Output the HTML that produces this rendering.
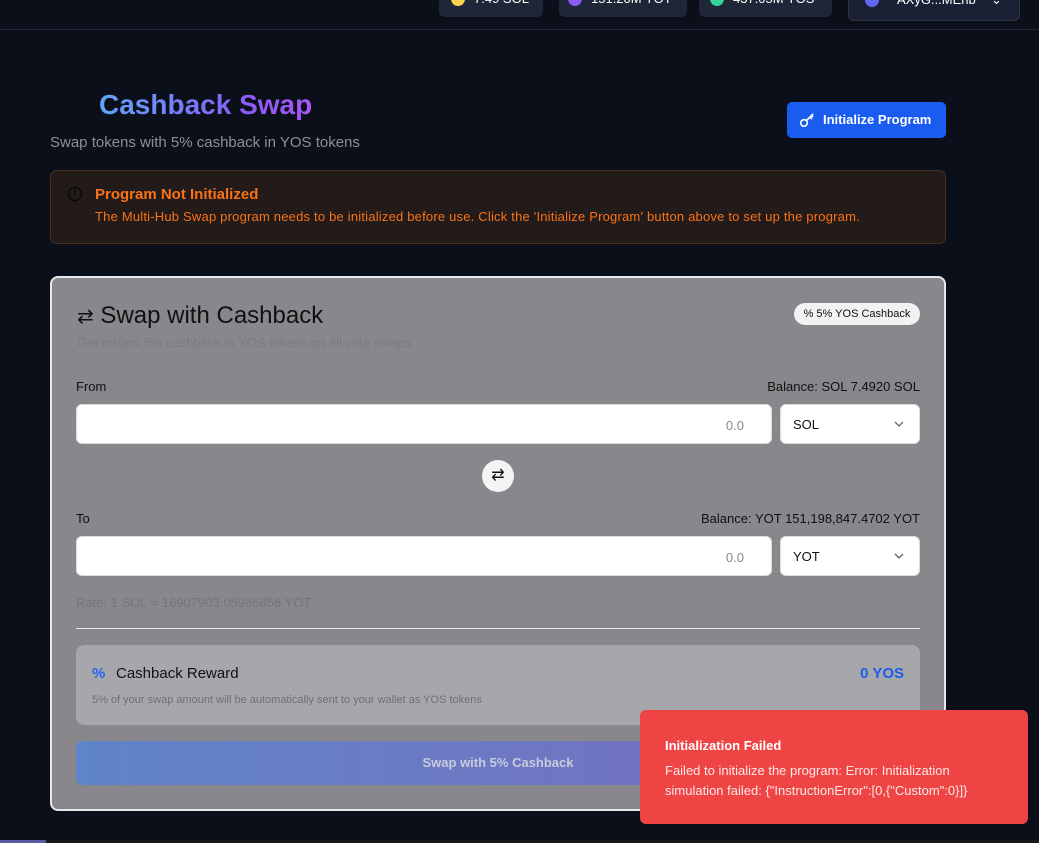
<!DOCTYPE html>
<html><head><style>
*{box-sizing:border-box;margin:0;padding:0}
body{width:1039px;height:843px;background:#0b0f1a;font-family:"Liberation Sans",sans-serif;position:relative;overflow:hidden}
.a{position:absolute}
.pill{position:absolute;top:-6px;height:23px;background:#1e2638;border-radius:6px;overflow:hidden}
.pill span{position:absolute;top:-3px;color:#fff;font-size:13px}
.dot{position:absolute;top:-2px;width:14px;height:14px;border-radius:50%}
.inp{position:absolute;background:#fff;border-radius:6px;border:1px solid #ddd}
</style></head><body>
<div class="pill" style="left:439px;width:104px"><div class="dot" style="left:12px;background:#fcd34d"></div><span style="left:35px">7.49 SOL</span></div>
<div class="pill" style="left:559px;width:128px"><div class="dot" style="left:9px;background:#8b5cf6"></div><span style="left:32px">151.20M YOT</span></div>
<div class="pill" style="left:699px;width:133px"><div class="dot" style="left:11px;background:#34d399"></div><span style="left:34px">437.05M YOS</span></div>
<div class="pill" style="left:848px;width:172px;height:27px;border:1px solid #334;background:#1a2134"><div class="dot" style="left:16px;background:#6366f1"></div><span style="left:48px">AXyG...MEhb</span><span style="left:142px">⌄</span></div>
<div class="a" style="left:0;top:29px;width:1039px;height:1px;background:#1f2637"></div>

<div class="a" style="left:99px;top:89px;font-size:28px;font-weight:bold;background:linear-gradient(90deg,#60a5fa,#8b5cf6 70%,#a855f7);-webkit-background-clip:text;color:transparent">Cashback Swap</div>
<div class="a" style="left:50px;top:134px;font-size:15px;color:#8a8f99">Swap tokens with 5% cashback in YOS tokens</div>
<div class="a" style="left:787px;top:102px;width:159px;height:36px;background:#1a5cf0;border-radius:5px;color:#fff;font-size:13px;font-weight:bold;line-height:36px;padding-left:36px;white-space:nowrap">Initialize Program
<svg class="a" style="left:12px;top:10px" width="16" height="16" viewBox="0 0 16 16" fill="none" stroke="#fff" stroke-width="1.6"><circle cx="5" cy="11" r="3.3"/><path d="M7.5 8.5L14 2M11 5l2 2M12.5 3.5l1.5 1.5"/></svg></div>

<div class="a" style="left:50px;top:170px;width:896px;height:74px;background:#231a1a;border:1px solid #4a2e1e;border-radius:7px"></div>
<div class="a" style="left:68px;top:187px;width:14px;height:14px;border:1.5px solid #000;border-radius:50%;color:#000;font-size:9px;text-align:center;line-height:11px;font-weight:bold">!</div>
<div class="a" style="left:95px;top:186px;font-size:15px;font-weight:bold;color:#f97316">Program Not Initialized</div>
<div class="a" style="left:95px;top:209px;font-size:13px;color:#f97316;letter-spacing:0.2px">The Multi-Hub Swap program needs to be initialized before use. Click the 'Initialize Program' button above to set up the program.</div>

<div class="a" style="left:50px;top:276px;width:896px;height:535px;background:#87878c;border:2px solid #e8e8ea;border-radius:8px"></div>
<div class="a" style="left:77px;top:302px;font-size:24px;color:#111"><span style="font-size:20px">⇄</span> Swap with Cashback</div>
<div class="a" style="left:77px;top:335px;font-size:13px;color:#7c7b7f">Get instant 5% cashback in YOS tokens on all your swaps</div>
<div class="a" style="left:794px;top:303px;width:126px;height:22px;background:#f2f2f2;border-radius:11px;font-size:11px;color:#111;line-height:22px;text-align:center">% 5% YOS Cashback</div>

<div class="a" style="left:76px;top:379px;font-size:13px;color:#111">From</div>
<div class="a" style="right:119px;top:379px;font-size:13px;color:#111">Balance: SOL 7.4920 SOL</div>
<div class="inp" style="left:76px;top:404px;width:696px;height:40px"><span class="a" style="right:27px;top:13px;font-size:13px;color:#888">0.0</span></div>
<div class="inp" style="left:780px;top:404px;width:140px;height:40px"><span class="a" style="left:12px;top:12px;font-size:13px;color:#111">SOL</span><svg class="a" style="right:14px;top:15px" width="12" height="8" viewBox="0 0 12 8" fill="none" stroke="#666" stroke-width="1.3"><path d="M2 2l4 4 4-4"/></svg></div>
<div class="a" style="left:482px;top:460px;width:32px;height:32px;background:#f4f4f4;border-radius:50%;text-align:center;line-height:32px;font-size:16px;color:#111">⇄</div>

<div class="a" style="left:76px;top:511px;font-size:13px;color:#111">To</div>
<div class="a" style="right:119px;top:511px;font-size:13px;color:#111">Balance: YOT 151,198,847.4702 YOT</div>
<div class="inp" style="left:76px;top:536px;width:696px;height:40px"><span class="a" style="right:27px;top:13px;font-size:13px;color:#888">0.0</span></div>
<div class="inp" style="left:780px;top:536px;width:140px;height:40px"><span class="a" style="left:12px;top:12px;font-size:13px;color:#111">YOT</span><svg class="a" style="right:14px;top:15px" width="12" height="8" viewBox="0 0 12 8" fill="none" stroke="#666" stroke-width="1.3"><path d="M2 2l4 4 4-4"/></svg></div>
<div class="a" style="left:76px;top:595px;font-size:13px;color:#75747a">Rate: 1 SOL = 16907903.05986858 YOT</div>
<div class="a" style="left:76px;top:628px;width:844px;height:1px;background:#e8e8ea"></div>

<div class="a" style="left:76px;top:645px;width:844px;height:80px;background:#a6a7ab;border-radius:8px"></div>
<div class="a" style="left:92px;top:665px;font-size:15px;font-weight:bold;color:#2563eb">%</div>
<div class="a" style="left:116px;top:665px;font-size:15px;color:#111">Cashback Reward</div>
<div class="a" style="left:92px;top:694px;font-size:11px;color:#6f6f74">5% of your swap amount will be automatically sent to your wallet as YOS tokens</div>
<div class="a" style="right:135px;top:665px;font-size:15px;font-weight:bold;color:#1d5ce8">0 YOS</div>

<div class="a" style="left:76px;top:741px;width:844px;height:44px;border-radius:6px;background:linear-gradient(90deg,#6085c8,#7a6bbd);color:#c8cbe0;font-size:13px;font-weight:bold;text-align:center;line-height:44px">Swap with 5% Cashback</div>

<div class="a" style="left:640px;top:710px;width:388px;height:114px;background:#ef4444;border-radius:6px;color:#fff">
<div class="a" style="left:25px;top:28px;font-size:13px;font-weight:bold">Initialization Failed</div>
<div class="a" style="left:25px;top:51px;font-size:13px;line-height:20px;color:#fde8e8">Failed to initialize the program: Error: Initialization<br>simulation failed: {"InstructionError":[0,{"Custom":0}]}</div>
</div>
<div class="a" style="left:0;top:840px;width:46px;height:3px;background:#5a5aa0"></div>
<div class="a" style="left:46px;top:840px;width:993px;height:3px;background:#1a1a1e"></div>
</body></html>
